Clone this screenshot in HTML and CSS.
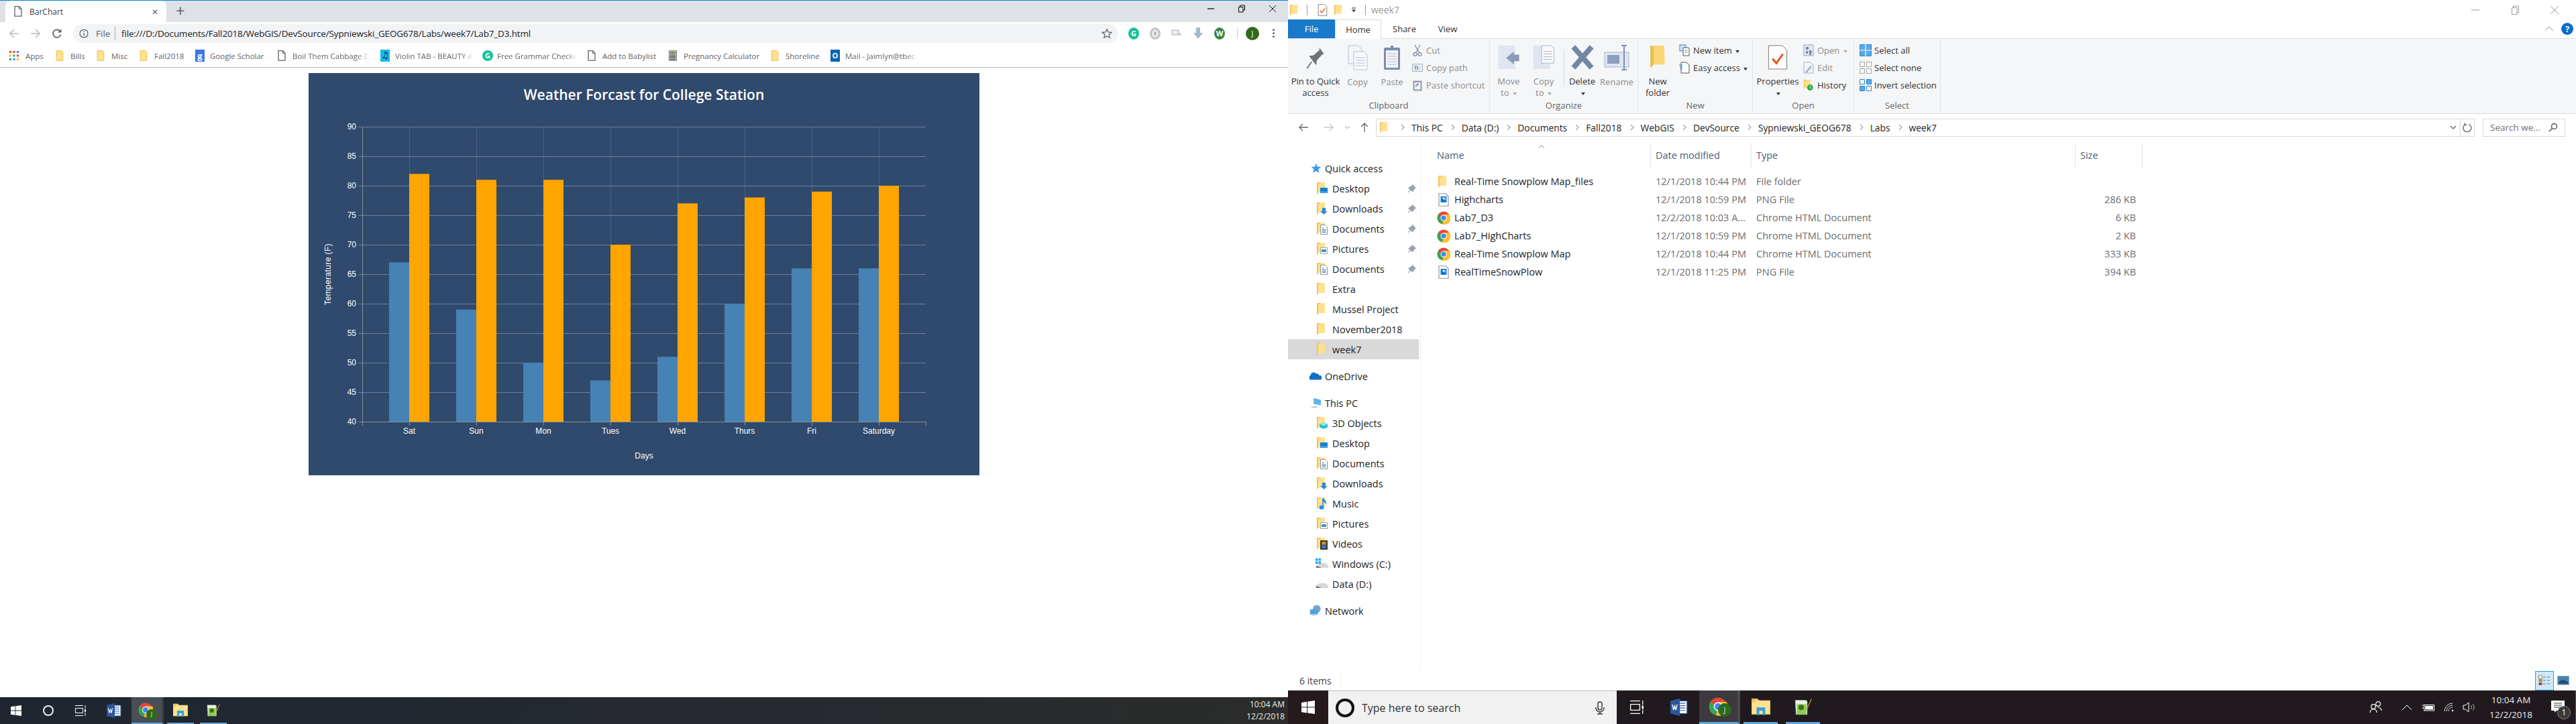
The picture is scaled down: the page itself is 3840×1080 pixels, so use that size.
FILE: index.html
```html
<!DOCTYPE html>
<html lang="en">
<head>
  <meta charset="UTF-8" />
  <title>BarChart</title>
  <link rel="stylesheet" href="styles.css">
</head>
<body>
  <svg class="defs" width="0" height="0">
    <symbol id="folder" viewBox="0 0 16 20">
      <path d="M0 1h5l2 1 5-1v15H3l-3 3z" fill="#f2c55c"/>
      <path d="M2 3l5-1 5-1v15H2z" fill="#ffe08f"/>
    </symbol>
    <symbol id="f-desktop" viewBox="0 0 16 20">
      <use href="#folder" width="16" height="20"/>
      <rect x="5" y="9" width="11" height="8" fill="#0f80d8"/>
      <path d="M6 15.500h9" stroke="#fff" stroke-dasharray="1 1"/>
    </symbol>
    <symbol id="f-downloads" viewBox="0 0 16 20">
      <use href="#folder" width="16" height="20"/>
      <path d="M8 9h5v5h3l-5.500 5L5 14h3z" fill="#2f87d8"/>
    </symbol>
    <symbol id="f-documents" viewBox="0 0 16 20">
      <use href="#folder" width="16" height="20"/>
      <path d="M5.500 4.500h7l3 3v11h-10z" fill="#fff" stroke="#8b8f95"/>
      <path d="M7.500 9h3M7.500 11.500h6M7.500 13.500h6M7.500 15.500h6" stroke="#3e7cb8"/>
    </symbol>
    <symbol id="f-pictures" viewBox="0 0 16 20">
      <use href="#folder" width="16" height="20"/>
      <rect x="5.500" y="8.500" width="10" height="9" fill="#fff" stroke="#a0a4a8"/>
      <rect x="7" y="11" width="7" height="4" fill="#4d90c4"/>
    </symbol>
    <symbol id="f-3d" viewBox="0 0 16 20">
      <use href="#folder" width="16" height="20"/>
      <path d="M10 9l6 2.500v5L10 19l-6-2.500v-5z" fill="#2cc0d8"/>
      <path d="M4 11.500l6 2.500 6-2.500-6-2.500z" fill="#9be6f0"/>
    </symbol>
    <symbol id="f-music" viewBox="0 0 16 20">
      <use href="#folder" width="16" height="20"/>
      <path d="M9 2v13" stroke="#1e90ea" stroke-width="1.600"/>
      <ellipse cx="7" cy="16" rx="3.500" ry="3" fill="#1e90ea"/>
      <path d="M9 2c3 2 6 5 5 10-1-3-3-4-5-5z" fill="#1e90ea"/>
    </symbol>
    <symbol id="f-videos" viewBox="0 0 16 20">
      <use href="#folder" width="16" height="20"/>
      <rect x="5" y="5" width="11" height="14" fill="#3a3a3a"/>
      <rect x="7.500" y="7" width="6" height="4.500" fill="#d8922b"/>
      <rect x="7.500" y="12.500" width="6" height="4.500" fill="#3f78c4"/>
    </symbol>
    <symbol id="bmfolder" viewBox="0 0 12 18">
      <path d="M.5.5h8l3 2v15H.5z" fill="#ffe08c" stroke="#e6bd52"/>
    </symbol>
    <symbol id="doc" viewBox="0 0 12 16">
      <path d="M1 .7h6.500L11 4.200v11H1z" fill="#fff" stroke="#5f6368" stroke-width="1.300"/>
      <path d="M7.200 .7v3.800H11" fill="none" stroke="#5f6368"/>
    </symbol>
    <symbol id="chrome" viewBox="0 0 20 20">
      <circle cx="10" cy="10" r="9.500" fill="#e8453c"/>
      <path d="M10 10L1.800 5.200A9.500 9.500 0 0 0 8 19.300z" fill="#34a853"/>
      <path d="M10 5h9A9.500 9.500 0 0 1 8 19.300L10 10z" fill="#fbc02d"/>
      <circle cx="10" cy="10" r="4.600" fill="#fff"/>
      <circle cx="10" cy="10" r="3.600" fill="#4285f4"/>
    </symbol>
    <symbol id="png" viewBox="0 0 14 18">
      <path d="M.7.7h9l3.600 3.600v13H.7z" fill="#fff" stroke="#8a929c"/>
      <rect x="3" y="4.500" width="8" height="8" fill="#0a78d5"/>
      <path d="M4.500 6l2.500 3 1-1 1.500 2V6z" fill="#cfe6fa"/>
    </symbol>
    <symbol id="pin" viewBox="0 0 12 12">
      <path d="M7 .8l4.200 4.200-1.400.6-1.800 3-1 1L1.800 5.400l1-1 3-1.800zM4 7.800L.8 11.200" fill="#9aa3ad" stroke="#9aa3ad"/>
    </symbol>
    <symbol id="tile-word" viewBox="0 0 22 22">
      <rect x="9" y="3" width="12" height="16" fill="#fff" stroke="#2b579a"/>
      <path d="M12 6h7M12 9h7M12 12h7M12 15h7" stroke="#2b579a"/>
      <path d="M0 3l12-3v22L0 19z" fill="#2b579a"/>
      <path d="M2.500 7.500l1.500 7 1.500-5 1.500 5 1.500-7" fill="none" stroke="#fff" stroke-width="1.200"/>
    </symbol>
    <symbol id="tile-explorer" viewBox="0 0 22 20">
      <path d="M0 1h7l2 2h13v16H0z" fill="#ffe190" stroke="#e2c062" stroke-width=".6"/>
      <path d="M0 1h7l2 2H4v2H0z" fill="#f3c55c"/>
      <path d="M6 20V11h10v9h-3v-5H9v5z" fill="#2ea3e0"/>
    </symbol>
    <symbol id="tile-notepad" viewBox="0 0 22 22">
      <path d="M1 3h13l2 1v17H2z" fill="#e8f0e3" stroke="#a8b4a0" stroke-width=".5"/>
      <path d="M3 8h12v13H3z" fill="#8ecb4e"/>
      <circle cx="8.500" cy="12" r="3.400" fill="#3a6e1e"/>
      <path d="M15 14L21 1l1 .5L16 15z" fill="#b88a2c"/>
    </symbol>
    <symbol id="winlogo" viewBox="0 0 16 16">
      <path d="M0 2.300l6.600-1v6.300H0zM7.400 1.200L16 0v7.600H7.400zM0 8.400h6.600v6.300L0 13.700zM7.400 8.400H16V16l-8.600-1.200z" fill="#fff"/>
    </symbol>
    <symbol id="taskview" viewBox="0 0 16 16">
      <path d="M0 .5h12M0 15.500h12M.5 4.500h11v7H.5z" fill="none" stroke="#fff"/>
      <path d="M15 0v5M15 11v5" stroke="#fff"/>
      <rect x="14" y="6" width="2" height="4" fill="#fff"/>
    </symbol>
    <symbol id="chev" viewBox="0 0 6 10">
      <path d="M1 1l4 4-4 4" fill="none" stroke="#6d6d6d"/>
    </symbol>
  </svg>

  <main class="screen">
    <section class="monitor">
      <div class="browser">
        <div class="tabstrip">
          <div class="tab">
            <svg class="tab-icon"><use href="#doc"/></svg>
            <span class="tab-title">BarChart</span>
            <span class="tab-close">&#10005;</span>
          </div>
          <span class="tab-new">+</span>
          <div class="winctl winctl-chrome">
            <svg width="12" height="12" viewBox="0 0 12 12"><path d="M1 6h10" stroke="#000" stroke-width="1.200"/></svg>
            <svg width="12" height="12" viewBox="0 0 12 12"><path d="M3.500 3.500V1h7v7H8M1.500 3.500h6.500v7.500H1.500z" fill="none" stroke="#000"/></svg>
            <svg width="12" height="12" viewBox="0 0 12 12"><path d="M1 1l10 10M11 1L1 11" stroke="#000" stroke-width=".9"/></svg>
          </div>
        </div>

        <div class="toolbar">
          <svg class="tb-btn" viewBox="0 0 16 16"><path d="M15 8H2M8 2L2 8l6 6" fill="none" stroke="#b9bcc0" stroke-width="1.600"/></svg>
          <svg class="tb-btn" viewBox="0 0 16 16"><path d="M1 8h13M8 2l6 6-6 6" fill="none" stroke="#b9bcc0" stroke-width="1.600"/></svg>
          <svg class="tb-btn" viewBox="0 0 16 16"><path d="M13.500 9.500A5.800 5.800 0 1 1 12 4" fill="none" stroke="#5f6368" stroke-width="1.800"/><path d="M14.500 1v5.500H9z" fill="#5f6368"/></svg>
          <div class="omnibox">
            <svg class="omni-info" viewBox="0 0 16 16"><circle cx="8" cy="8" r="6.800" fill="none" stroke="#5f6368" stroke-width="1.400"/><path d="M8 7v5M8 4v1.600" stroke="#5f6368" stroke-width="1.600"/></svg>
            <span class="omni-file">File</span>
            <span class="omni-url">file:///D:/Documents/Fall2018/WebGIS/DevSource/Sypniewski_GEOG678/Labs/week7/Lab7_D3.html</span>
            <svg class="omni-star" viewBox="0 0 16 16"><path d="M8 1.500l2 4.400 4.800.5-3.600 3.200 1 4.700L8 11.900l-4.200 2.400 1-4.700L1.200 6.400 6 5.900z" fill="none" stroke="#5f6368" stroke-width="1.300"/></svg>
          </div>
          <div class="exts">
            <span class="ext ext-g">G</span>
            <span class="ext ext-o"></span>
            <svg class="ext-svg" viewBox="0 0 16 16"><path d="M1 3h10v7H1z" fill="#eee" stroke="#aaa"/><path d="M9 9h6M12 7l3 2-3 2" fill="none" stroke="#bbb"/></svg>
            <svg class="ext-svg" viewBox="0 0 16 18"><path d="M5 0h6v8h4l-7 9-7-9h4z" fill="#a7b9c4"/></svg>
            <span class="ext ext-w">W</span>
            <span class="ext-sep"></span>
            <span class="avatar">J</span>
            <span class="kebab"></span>
          </div>
        </div>

        <div class="bookmarks">
          <div class="bm bm-apps">
            <svg class="bm-apps-icon" viewBox="0 0 14 14">
              <g fill="#ea4335"><rect width="3" height="3"/><rect x="5.500" width="3" height="3"/></g>
              <rect x="11" width="3" height="3" fill="#4285f4"/>
              <rect y="5.500" width="3" height="3" fill="#fbbc05"/>
              <rect x="5.500" y="5.500" width="3" height="3" fill="#34a853"/>
              <rect x="11" y="5.500" width="3" height="3" fill="#ea4335"/>
              <rect y="11" width="3" height="3" fill="#34a853"/>
              <rect x="5.500" y="11" width="3" height="3" fill="#4285f4"/>
              <rect x="11" y="11" width="3" height="3" fill="#fbbc05"/>
            </svg>
            <span>Apps</span>
          </div>
          <div class="bm bm-bills"><svg class="bm-icon"><use href="#bmfolder"/></svg><span>Bills</span></div>
          <div class="bm bm-misc"><svg class="bm-icon"><use href="#bmfolder"/></svg><span>Misc</span></div>
          <div class="bm bm-fall"><svg class="bm-icon"><use href="#bmfolder"/></svg><span>Fall2018</span></div>
          <div class="bm bm-scholar"><span class="fav fav-scholar">g</span><span>Google Scholar</span></div>
          <div class="bm bm-boil"><svg class="bm-icon"><use href="#doc"/></svg><span class="bm-fade">Boil Them Cabbage D</span></div>
          <div class="bm bm-violin"><span class="fav fav-violin">&#9835;</span><span class="bm-fade">Violin TAB - BEAUTY A</span></div>
          <div class="bm bm-grammar"><span class="fav fav-grammar">G</span><span class="bm-fade">Free Grammar Checke</span></div>
          <div class="bm bm-baby"><svg class="bm-icon"><use href="#doc"/></svg><span>Add to Babylist</span></div>
          <div class="bm bm-calc">
            <svg class="bm-icon" viewBox="0 0 14 18"><rect x=".5" y=".5" width="13" height="17" fill="#d9dbd6" stroke="#666"/><rect x="2" y="2" width="10" height="4" fill="#7c8a63"/><path d="M2 8h10M2 10.500h10M2 13h10M2 15.500h10" stroke="#222" stroke-width="1.400" stroke-dasharray="2 .6"/></svg>
            <span>Pregnancy Calculator</span>
          </div>
          <div class="bm bm-shore"><svg class="bm-icon"><use href="#bmfolder"/></svg><span>Shoreline</span></div>
          <div class="bm bm-mail"><span class="fav fav-mail">O</span><span class="bm-fade">Mail - Jaimlyn@tbec-</span></div>
        </div>

        <div class="page">
          <svg class="chart" width="1000" height="600" viewBox="0 0 1000 600">
            <rect class="chart-bg" width="1000" height="600"/>
            <text class="chart-title" x="500" y="40">Weather Forcast for College Station</text>

            <path class="grid-y" d="M74 80.500h846M74 124.500h846M74 168.500h846M74 212.500h846M74 256.500h846M74 300.500h846M74 344.500h846M74 388.500h846M74 432.500h846M74 476.500h846"/>
            <path class="grid-x" d="M150.500 80v440M250.500 80v440M350.500 80v440M450.500 80v440M550.500 80v440M650.500 80v440M750.500 80v440M850.500 80v440"/>

            <g class="bars-low">
              <rect x="120" y="282.400" width="30" height="237.600"/>
              <rect x="220" y="352.800" width="30" height="167.200"/>
              <rect x="320" y="432" width="30" height="88"/>
              <rect x="420" y="458.400" width="30" height="61.600"/>
              <rect x="520" y="423.200" width="30" height="96.800"/>
              <rect x="620" y="344" width="30" height="176"/>
              <rect x="720" y="291.200" width="30" height="228.800"/>
              <rect x="820" y="291.200" width="30" height="228.800"/>
            </g>
            <g class="bars-high">
              <rect x="150" y="150.400" width="30" height="369.600"/>
              <rect x="250" y="159.200" width="30" height="360.800"/>
              <rect x="350" y="159.200" width="30" height="360.800"/>
              <rect x="450" y="256" width="30" height="264"/>
              <rect x="550" y="194.400" width="30" height="325.600"/>
              <rect x="650" y="185.600" width="30" height="334.400"/>
              <rect x="750" y="176.800" width="30" height="343.200"/>
              <rect x="850" y="168" width="30" height="352"/>
            </g>

            <path class="axis" d="M74 520.500h846M80.500 80v446M920.500 520v6M150.500 520v6M250.500 520v6M350.500 520v6M450.500 520v6M550.500 520v6M650.500 520v6M750.500 520v6M850.500 520v6"/>

            <g class="tick-y">
              <text x="71" y="84">90</text>
              <text x="71" y="128">85</text>
              <text x="71" y="172">80</text>
              <text x="71" y="216">75</text>
              <text x="71" y="260">70</text>
              <text x="71" y="304">65</text>
              <text x="71" y="348">60</text>
              <text x="71" y="392">55</text>
              <text x="71" y="436">50</text>
              <text x="71" y="480">45</text>
              <text x="71" y="524">40</text>
            </g>
            <g class="tick-x">
              <text x="150" y="538">Sat</text>
              <text x="250" y="538">Sun</text>
              <text x="350" y="538">Mon</text>
              <text x="450" y="538">Tues</text>
              <text x="550" y="538">Wed</text>
              <text x="650" y="538">Thurs</text>
              <text x="750" y="538">Fri</text>
              <text x="850" y="538">Saturday</text>
            </g>
            <text class="axis-label" x="500" y="575">Days</text>
            <text class="axis-label axis-label-y" transform="translate(33 300) rotate(-90)">Temperature (F)</text>
          </svg>
        </div>
      </div>

      <footer class="taskbar taskbar-left">
        <svg class="tk-start"><use href="#winlogo"/></svg>
        <span class="tk-ring"></span>
        <svg class="tk-view"><use href="#taskview"/></svg>
        <svg class="tk-word"><use href="#tile-word"/></svg>
        <div class="tk-tile tk-chrome"><svg class="tk-chrome-icon"><use href="#chrome"/></svg><span class="tk-badge">J</span></div>
        <div class="tk-tile tk-explorer"><svg class="tk-icon"><use href="#tile-explorer"/></svg></div>
        <div class="tk-tile tk-notepad"><svg class="tk-icon"><use href="#tile-notepad"/></svg></div>
        <div class="tk-clock"><span>10:04 AM</span><span>12/2/2018</span></div>
      </footer>
    </section>

    <section class="monitor">
      <div class="explorer">
        <div class="titlebar">
          <svg class="qa-folder"><use href="#folder"/></svg>
          <span class="qa-sep"></span>
          <svg class="qa-check" viewBox="0 0 16 20"><path d="M1 .5h10l4 4v15H1z" fill="#fff" stroke="#777"/><path d="M4 11l3 3 5-7" fill="none" stroke="#e8531f" stroke-width="1.500"/></svg>
          <svg class="qa-folder qa-folder2"><use href="#folder"/></svg>
          <svg class="qa-drop" viewBox="0 0 8 8"><path d="M1 1h6" stroke="#222"/><path d="M1 3.500h6L4 7z" fill="#222"/></svg>
          <span class="qa-sep qa-sep2"></span>
          <span class="title-text">week7</span>
          <div class="winctl winctl-ex">
            <svg width="14" height="14" viewBox="0 0 14 14"><path d="M1 7h12" stroke="#999"/></svg>
            <svg width="14" height="14" viewBox="0 0 14 14"><path d="M4.500 3.500V1h8v10H10M2.500 3.500H10v10H2.500z" fill="none" stroke="#999"/></svg>
            <svg width="14" height="14" viewBox="0 0 14 14"><path d="M1 1l12 12M13 1L1 13" stroke="#999"/></svg>
          </div>
        </div>

        <div class="ribbon-tabs">
          <span class="rt rt-file">File</span>
          <span class="rt rt-home">Home</span>
          <span class="rt rt-share">Share</span>
          <span class="rt rt-view">View</span>
          <svg class="rt-caret" viewBox="0 0 14 8"><path d="M1 7l6-6 6 6" fill="none" stroke="#999"/></svg>
          <span class="rt-help">?</span>
        </div>

        <div class="ribbon">
          <div class="rgroup rg-clipboard">
            <div class="rg-body">
              <div class="rbig rbig-pin">
                <svg class="rbig-icon" viewBox="0 0 30 38"><path d="M21 4l7 10-3 1-8 9-1 7-11-14 7-1 9-8z" fill="#6f747a"/><path d="M9 26L2 36" stroke="#6f747a" stroke-width="2"/></svg>
                <span>Pin to Quick<br>access</span>
              </div>
              <div class="rbig rbig-copy dim">
                <svg class="rbig-icon" viewBox="0 0 30 38"><path d="M1 1h15l5 5v22H1z" fill="#f3f5f8" stroke="#b6c1d2"/><path d="M9 10h15l5 5v22H9z" fill="#f8f9fb" stroke="#b6c1d2"/><path d="M12 19h14M12 23h14M12 27h14M12 31h14" stroke="#b6c1d2"/></svg>
                <span>Copy</span>
              </div>
              <div class="rbig rbig-paste dim">
                <svg class="rbig-icon" viewBox="0 0 30 38"><rect x="3" y="4" width="24" height="33" rx="2" fill="#7d8eab"/><rect x="6" y="8" width="18" height="26" fill="#f2f4f7"/><path d="M8 13h14M8 17h14M8 21h14M8 25h14M8 29h14" stroke="#b6c1d2"/><path d="M10 7l3-2V1h4v4l3 2z" fill="#7d8eab"/></svg>
                <span>Paste</span>
              </div>
              <div class="rsmall-list rl-clip dim">
                <div class="rsmall"><svg class="rsmall-icon" viewBox="0 0 16 18"><path d="M4 1l6 11M12 1L6 12" stroke="#8593ab" stroke-width="1.400"/><circle cx="4.500" cy="15" r="2.500" fill="none" stroke="#8593ab" stroke-width="1.400"/><circle cx="11.500" cy="15" r="2.500" fill="none" stroke="#8593ab" stroke-width="1.400"/></svg><span>Cut</span></div>
                <div class="rsmall"><svg class="rsmall-icon" viewBox="0 0 16 18"><rect x=".5" y="3.500" width="15" height="11" fill="#e7ebf1" stroke="#a9b4c6"/><path d="M4 6l2 6M7 6l2 6" stroke="#556"/></svg><span>Copy path</span></div>
                <div class="rsmall"><svg class="rsmall-icon" viewBox="0 0 16 18"><rect x="1.500" y="2.500" width="13" height="15" fill="#8b9ab3"/><rect x="3.500" y="5" width="9" height="10.500" fill="#f2f4f7"/><path d="M6 12V8h4M8 7l2 1-2 2" fill="none" stroke="#667"/></svg><span>Paste shortcut</span></div>
              </div>
            </div>
            <span class="rg-label">Clipboard</span>
          </div>

          <div class="rgroup rg-organize">
            <div class="rg-body">
              <div class="rbig rbig-move dim">
                <svg class="rbig-icon" viewBox="0 0 34 38"><rect x="1" y="1" width="26" height="36" fill="#dfe6f2"/><path d="M13 20l12-10v5h8v10h-8v5z" fill="#8c9bb5"/></svg>
                <span>Move<br>to <i class="drop"></i></span>
              </div>
              <div class="rbig rbig-copyto dim">
                <svg class="rbig-icon" viewBox="0 0 34 38"><rect x="1" y="1" width="26" height="36" fill="#dfe6f2"/><path d="M14 1h14l5 5v22H14z" fill="#f7f8fa" stroke="#aab6c9"/><path d="M17 10h13M17 14h13M17 18h13M17 22h13" stroke="#aab6c9"/></svg>
                <span>Copy<br>to <i class="drop"></i></span>
              </div>
              <span class="rg-innersep"></span>
              <div class="rbig rbig-delete">
                <svg class="rbig-icon" viewBox="0 0 34 38"><path d="M3 3l28 32M31 3L3 35" stroke="#7486a6" stroke-width="8"/></svg>
                <span>Delete<br><i class="drop drop-dark"></i></span>
              </div>
              <div class="rbig rbig-rename dim">
                <svg class="rbig-icon" viewBox="0 0 38 38"><rect x="1" y="11" width="36" height="22" fill="#dfe6f2" stroke="#aab6c9"/><rect x="5" y="15" width="18" height="13" fill="#8c9fbd"/><path d="M26 1h8M26 37h8M30 1v36" stroke="#7f90ab" stroke-width="2"/></svg>
                <span>Rename</span>
              </div>
            </div>
            <span class="rg-label">Organize</span>
          </div>

          <div class="rgroup rg-new">
            <div class="rg-body">
              <div class="rbig rbig-folder">
                <svg class="rbig-icon" viewBox="0 0 24 38"><path d="M1 1h21l1 29H6l-5 5z" fill="#fbd675"/><path d="M1 1v34l5-5V3z" fill="#e9bd53"/></svg>
                <span>New<br>folder</span>
              </div>
              <div class="rsmall-list rl-new">
                <div class="rsmall"><svg class="rsmall-icon" viewBox="0 0 16 18"><rect x="1" y="1" width="9" height="9" fill="#d8e8f5" stroke="#4f7ea8"/><path d="M6 5h8l1 1v11H6z" fill="#fff" stroke="#555"/><path d="M8 9h5M8 12h5" stroke="#888"/></svg><span>New item <i class="drop drop-dark"></i></span></div>
                <div class="rsmall"><svg class="rsmall-icon" viewBox="0 0 16 18"><path d="M3 1h8l4 4v12H3z" fill="#fff" stroke="#555"/><path d="M0 5h5M1 8h4M2 11h3" stroke="#2472c8"/></svg><span>Easy access <i class="drop drop-dark"></i></span></div>
              </div>
            </div>
            <span class="rg-label">New</span>
          </div>

          <div class="rgroup rg-open">
            <div class="rg-body">
              <div class="rbig rbig-props">
                <svg class="rbig-icon" viewBox="0 0 30 38"><path d="M1 1h21l7 7v29H1z" fill="#fff" stroke="#777"/><path d="M7 21l6 7 10-14" fill="none" stroke="#e8531f" stroke-width="3"/></svg>
                <span>Properties<br><i class="drop drop-dark"></i></span>
              </div>
              <div class="rsmall-list rl-open">
                <div class="rsmall dim"><svg class="rsmall-icon" viewBox="0 0 16 18"><rect x="1" y="1" width="14" height="16" fill="#e5e9f0" stroke="#9aa6ba"/><path d="M4 4h4v4H4zM4 10h3v4H4z" fill="#7a8aa5"/><path d="M10 8l4 4h-2v4h-3v-4H8z" fill="#7a8aa5"/></svg><span>Open <i class="drop"></i></span></div>
                <div class="rsmall dim"><svg class="rsmall-icon" viewBox="0 0 16 18"><path d="M1 1h10l4 4v12H1z" fill="#f4f6f9" stroke="#a3b0c4"/><path d="M3 15L11 6l2 2-8 9z" fill="#9fb5d6"/></svg><span>Edit</span></div>
                <div class="rsmall"><svg class="rsmall-icon" viewBox="0 0 16 20"><use href="#folder" width="14" height="18"/><circle cx="10.500" cy="14" r="5" fill="#2fae4a"/><path d="M10.500 11v3l2 1.500" fill="none" stroke="#fff"/></svg><span>History</span></div>
              </div>
            </div>
            <span class="rg-label">Open</span>
          </div>

          <div class="rgroup rg-select">
            <div class="rg-body">
              <div class="rsmall-list rl-select">
                <div class="rsmall"><svg class="rsmall-icon" viewBox="0 0 18 18"><path d="M.5.5h17v17H.5z" fill="#59a9e8" stroke="#2e86cf"/><path d="M9 0v18M0 9h18" stroke="#fff" stroke-width="1.200"/></svg><span>Select all</span></div>
                <div class="rsmall"><svg class="rsmall-icon" viewBox="0 0 18 18"><path d="M.5.500h7v7h-7zM10.500.500h7v7h-7zM.5 10.500h7v7h-7zM10.500 10.500h7v7h-7z" fill="none" stroke="#a9a9a9"/></svg><span>Select none</span></div>
                <div class="rsmall"><svg class="rsmall-icon" viewBox="0 0 18 18"><path d="M.5 10.500h7v7h-7zM10.500.500h7v7h-7z" fill="#59a9e8" stroke="#2e86cf"/><path d="M.5.500h7v7h-7zM10.500 10.500h7v7h-7z" fill="none" stroke="#2e86cf"/></svg><span>Invert selection</span></div>
              </div>
            </div>
            <span class="rg-label">Select</span>
          </div>
        </div>

        <div class="navrow">
          <svg class="nav-btn nav-back" viewBox="0 0 16 14"><path d="M15 7H2M7 2L2 7l5 5" fill="none" stroke="#666" stroke-width="1.300"/></svg>
          <svg class="nav-btn nav-fwd" viewBox="0 0 16 14"><path d="M1 7h13M9 2l5 5-5 5" fill="none" stroke="#c5c5c5" stroke-width="1.300"/></svg>
          <svg class="nav-btn nav-drop" viewBox="0 0 10 6"><path d="M1 1l4 4 4-4" fill="none" stroke="#777"/></svg>
          <svg class="nav-btn nav-up" viewBox="0 0 14 16"><path d="M7 15V2M2 7l5-5 5 5" fill="none" stroke="#666" stroke-width="1.300"/></svg>
          <div class="address">
            <svg class="addr-folder"><use href="#folder"/></svg>
            <svg class="crumb-sep"><use href="#chev"/></svg><span>This PC</span>
            <svg class="crumb-sep"><use href="#chev"/></svg><span>Data (D:)</span>
            <svg class="crumb-sep"><use href="#chev"/></svg><span>Documents</span>
            <svg class="crumb-sep"><use href="#chev"/></svg><span>Fall2018</span>
            <svg class="crumb-sep"><use href="#chev"/></svg><span>WebGIS</span>
            <svg class="crumb-sep"><use href="#chev"/></svg><span>DevSource</span>
            <svg class="crumb-sep"><use href="#chev"/></svg><span>Sypniewski_GEOG678</span>
            <svg class="crumb-sep"><use href="#chev"/></svg><span>Labs</span>
            <svg class="crumb-sep"><use href="#chev"/></svg><span>week7</span>
            <div class="addr-end">
              <svg class="addr-drop" viewBox="0 0 10 6"><path d="M1 1l4 4 4-4" fill="none" stroke="#555" stroke-width="1.200"/></svg>
              <span class="addr-refresh"><svg viewBox="0 0 14 16" width="14" height="16"><path d="M9 3.200A6 6 0 1 1 4.500 3.200" fill="none" stroke="#555" stroke-width="1.200"/><path d="M3 1v3.500h3.500" fill="none" stroke="#555"/></svg></span>
            </div>
          </div>
          <div class="searchbox">
            <span>Search we...</span>
            <svg viewBox="0 0 14 14" width="14" height="14"><circle cx="8.500" cy="5.500" r="4" fill="none" stroke="#555" stroke-width="1.500"/><path d="M5.500 8.500L1 13" stroke="#555" stroke-width="1.600"/></svg>
          </div>
        </div>

        <div class="ex-body">
          <nav class="sidebar">
            <div class="side side-top"><svg class="side-top-icon" viewBox="0 0 20 18"><path d="M11 1l2.300 5.500 6 .4-4.600 3.800 1.500 5.800-5.200-3.100-5 3.100 1.400-5.800L3 6.900l6-.4z" fill="#3a9be8"/></svg><span>Quick access</span></div>
            <div class="side"><svg class="side-icon"><use href="#f-desktop"/></svg><span>Desktop</span><svg class="side-pin"><use href="#pin"/></svg></div>
            <div class="side"><svg class="side-icon"><use href="#f-downloads"/></svg><span>Downloads</span><svg class="side-pin"><use href="#pin"/></svg></div>
            <div class="side"><svg class="side-icon"><use href="#f-documents"/></svg><span>Documents</span><svg class="side-pin"><use href="#pin"/></svg></div>
            <div class="side"><svg class="side-icon"><use href="#f-pictures"/></svg><span>Pictures</span><svg class="side-pin"><use href="#pin"/></svg></div>
            <div class="side"><svg class="side-icon"><use href="#f-documents"/></svg><span>Documents</span><svg class="side-pin"><use href="#pin"/></svg></div>
            <div class="side"><svg class="side-icon"><use href="#folder"/></svg><span>Extra</span></div>
            <div class="side"><svg class="side-icon"><use href="#folder"/></svg><span>Mussel Project</span></div>
            <div class="side"><svg class="side-icon"><use href="#folder"/></svg><span>November2018</span></div>
            <div class="side side-on"><svg class="side-icon"><use href="#folder"/></svg><span>week7</span></div>

            <div class="side side-top side-gap"><svg class="side-top-icon" viewBox="0 0 20 14"><path d="M2 13a3.500 3.500 0 0 1 0-7 5 5 0 0 1 9-3 4 4 0 0 1 5 3 3.500 3.500 0 0 1 2 7z" fill="#0f6fc6"/></svg><span>OneDrive</span></div>
            <div class="side side-top side-gap"><svg class="side-top-icon" viewBox="0 0 20 18"><path d="M7 1l12 3v9L7 11z" fill="#5cb8ea"/><path d="M1 16l9-2 5 2-7 2z" fill="#c9ced4"/></svg><span>This PC</span></div>
            <div class="side"><svg class="side-icon"><use href="#f-3d"/></svg><span>3D Objects</span></div>
            <div class="side"><svg class="side-icon"><use href="#f-desktop"/></svg><span>Desktop</span></div>
            <div class="side"><svg class="side-icon"><use href="#f-documents"/></svg><span>Documents</span></div>
            <div class="side"><svg class="side-icon"><use href="#f-downloads"/></svg><span>Downloads</span></div>
            <div class="side"><svg class="side-icon"><use href="#f-music"/></svg><span>Music</span></div>
            <div class="side"><svg class="side-icon"><use href="#f-pictures"/></svg><span>Pictures</span></div>
            <div class="side"><svg class="side-icon"><use href="#f-videos"/></svg><span>Videos</span></div>
            <div class="side"><svg class="side-drive" viewBox="0 0 20 16"><path d="M1 11l5-4h9l4 4v3H1z" fill="#d4d6d8"/><path d="M1 11v3h8z" fill="#666"/><g fill="#18a8ee"><rect width="3.500" height="3.500"/><rect x="4.500" width="3.500" height="3.500"/><rect y="4.500" width="3.500" height="3.500"/><rect x="4.500" y="4.500" width="3.500" height="3.500"/></g></svg><span>Windows (C:)</span></div>
            <div class="side"><svg class="side-drive" viewBox="0 0 20 16"><path d="M1 11l5-4h9l4 4v3H1z" fill="#d4d6d8"/><path d="M1 11v3h8z" fill="#666"/></svg><span>Data (D:)</span></div>
            <div class="side side-top side-gap"><svg class="side-top-icon" viewBox="0 0 20 20"><circle cx="12" cy="7" r="6.500" fill="#6fa6cf"/><path d="M1 8h13v8H1z" fill="#4aa3e3"/><path d="M5 16h5v2H4z" fill="#b8c3cc"/></svg><span>Network</span></div>
          </nav>

          <div class="files">
            <div class="file-head">
              <span class="col col-name">Name<svg class="sort" viewBox="0 0 10 6"><path d="M1 5l4-4 4 4" fill="none" stroke="#888"/></svg></span>
              <span class="col col-date">Date modified</span>
              <span class="col col-type">Type</span>
              <span class="col col-size">Size</span>
            </div>
            <div class="file-row"><span class="col col-name"><svg class="file-icon"><use href="#folder"/></svg>Real-Time Snowplow Map_files</span><span class="col col-date">12/1/2018 10:44 PM</span><span class="col col-type">File folder</span><span class="col col-size"></span></div>
            <div class="file-row"><span class="col col-name"><svg class="file-icon"><use href="#png"/></svg>Highcharts</span><span class="col col-date">12/1/2018 10:59 PM</span><span class="col col-type">PNG File</span><span class="col col-size">286 KB</span></div>
            <div class="file-row"><span class="col col-name"><svg class="file-icon"><use href="#chrome"/></svg>Lab7_D3</span><span class="col col-date">12/2/2018 10:03 A...</span><span class="col col-type">Chrome HTML Document</span><span class="col col-size">6 KB</span></div>
            <div class="file-row"><span class="col col-name"><svg class="file-icon"><use href="#chrome"/></svg>Lab7_HighCharts</span><span class="col col-date">12/1/2018 10:59 PM</span><span class="col col-type">Chrome HTML Document</span><span class="col col-size">2 KB</span></div>
            <div class="file-row"><span class="col col-name"><svg class="file-icon"><use href="#chrome"/></svg>Real-Time Snowplow Map</span><span class="col col-date">12/1/2018 10:44 PM</span><span class="col col-type">Chrome HTML Document</span><span class="col col-size">333 KB</span></div>
            <div class="file-row"><span class="col col-name"><svg class="file-icon"><use href="#png"/></svg>RealTimeSnowPlow</span><span class="col col-date">12/1/2018 11:25 PM</span><span class="col col-type">PNG File</span><span class="col col-size">394 KB</span></div>
          </div>
        </div>

        <div class="statusbar">
          <span class="status-count">6 items</span>
          <div class="viewbtns">
            <span class="viewbtn-on"><svg width="18" height="16" viewBox="0 0 18 16"><rect x=".5" y="1" width="5" height="4" fill="#fff" stroke="#888"/><rect x=".5" y="6" width="5" height="4" fill="#a8943a"/><rect x=".5" y="11" width="5" height="4" fill="#a9442c"/><path d="M7 3h4M13 3h4M7 8h4M13 8h4M7 13h4M13 13h4" stroke="#777"/></svg></span>
            <svg width="18" height="14" viewBox="0 0 18 14"><rect x=".5" y=".5" width="17" height="13" fill="#3f86bd" stroke="#aaa"/><path d="M2 9l6-3 8 3v3H2z" fill="#264f6d"/></svg>
          </div>
        </div>
      </div>

      <footer class="taskbar taskbar-right">
        <div class="tr-start"><svg class="tr-logo"><use href="#winlogo"/></svg></div>
        <div class="tr-search">
          <span class="tr-ring"></span>
          <span class="tr-search-text">Type here to search</span>
          <svg class="tr-mic" viewBox="0 0 14 20"><rect x="4" y="1" width="6" height="12" rx="3" fill="none" stroke="#333" stroke-width="1.400"/><path d="M1 9v1a6 6 0 0 0 12 0V9M7 16v3M3 19h8" fill="none" stroke="#333" stroke-width="1.400"/></svg>
        </div>
        <svg class="tr-view"><use href="#taskview"/></svg>
        <svg class="tr-word"><use href="#tile-word"/></svg>
        <div class="tr-tile tr-chrome"><svg class="tr-chrome-icon"><use href="#chrome"/></svg><span class="tr-badge">J</span></div>
        <div class="tr-tile tr-explorer"><svg class="tr-icon"><use href="#tile-explorer"/></svg></div>
        <div class="tr-tile tr-notepad"><svg class="tr-icon"><use href="#tile-notepad"/></svg></div>

        <div class="tray">
          <svg class="tray-people" viewBox="0 0 20 20"><circle cx="13" cy="5" r="3.300" fill="none" stroke="#fff" stroke-width="1.200"/><circle cx="6" cy="9" r="3.300" fill="none" stroke="#fff" stroke-width="1.200"/><path d="M1 18c0-3 2-5 5-5s5 2 5 5M12 10c3 0 6 2 6 5" fill="none" stroke="#fff" stroke-width="1.200"/></svg>
          <svg class="tray-caret" viewBox="0 0 16 9"><path d="M1 8l7-7 7 7" fill="none" stroke="#fff"/></svg>
          <svg class="tray-batt" viewBox="0 0 20 12"><path d="M0 3h4M0 7h4" stroke="#fff" stroke-width=".8"/><rect x="3.500" y="2.500" width="15" height="8.500" fill="none" stroke="#fff"/><rect x="5" y="4" width="12" height="5.500" fill="#fff"/></svg>
          <svg class="tray-wifi" viewBox="0 0 16 14"><path d="M1 13a12 12 0 0 1 12-12M4 13a9 9 0 0 1 9-9M7 13a6 6 0 0 1 6-6" fill="none" stroke="#ddd"/><circle cx="13" cy="12" r="1.300" fill="#fff"/></svg>
          <svg class="tray-vol" viewBox="0 0 20 16"><path d="M1 5h3l5-4v14l-5-4H1z" fill="none" stroke="#fff"/><path d="M12 5a4 4 0 0 1 0 6M15 3a7 7 0 0 1 0 10" fill="none" stroke="#bbb"/></svg>
          <div class="tray-clock"><span>10:04 AM</span><span>12/2/2018</span></div>
          <div class="tray-note">
            <svg width="20" height="19" viewBox="0 0 20 19"><path d="M0 0h20v15H8l-3 3v-3H0z" fill="#fff"/><path d="M4 4h12M4 7h12M4 10h12" stroke="#333"/></svg>
            <span class="note-count">1</span>
          </div>
        </div>
      </footer>
    </section>
  </main>
</body>
</html>
```

FILE: styles.css
```css
* {
  box-sizing: border-box;
}
html, body {
  margin: 0;
  padding: 0;
  width: 3840px;
  height: 1080px;
  overflow: hidden;
  background: #fff;
  font-family: 'Open Sans', 'Noto Sans', sans-serif;
}
.defs {
  position: absolute;
}
.screen {
  display: grid;
  grid-template-columns: 1920px 1920px;
  height: 1080px;
}
.monitor {
  display: flex;
  flex-direction: column;
  height: 1080px;
  min-width: 0;
}

/* chrome window */
.browser {
  flex: 1;
  display: flex;
  flex-direction: column;
  min-height: 0;
}
.tabstrip {
  height: 33px;
  display: flex;
  align-items: flex-end;
  background: #dee1e6;
  border-top: 1px solid #0a84d8;
}
.tab {
  width: 240px;
  height: 32px;
  margin-left: 8px;
  padding: 0 12px 0 13px;
  display: flex;
  align-items: center;
  background: #fff;
  border-radius: 8px 8px 0 0;
  font-size: 12px;
  color: #3c4043;
}
.tab-icon {
  width: 12px;
  height: 16px;
  margin-right: 11px;
}
.tab-title {
  flex: 1;
}
.tab-close {
  font-size: 12px;
  color: #5f6368;
}
.tab-new {
  margin: 0 0 5px 14px;
  font-size: 24px;
  line-height: 24px;
  color: #5f6368;
}
.winctl {
  margin-left: auto;
  display: flex;
  gap: 34px;
}
.winctl-chrome {
  align-self: flex-start;
  margin-top: 6px;
  padding-right: 17px;
}
.toolbar {
  height: 33px;
  display: flex;
  align-items: center;
  padding-left: 13px;
  background: #fff;
}
.tb-btn {
  width: 16px;
  height: 16px;
  margin-right: 16px;
}
.omnibox {
  width: 1558px;
  height: 28px;
  padding: 0 9px;
  display: flex;
  align-items: center;
  background: #f1f3f4;
  border-radius: 14px;
  font-size: 13.5px;
  color: #202124;
}
.omni-info {
  width: 14px;
  height: 14px;
  margin-right: 11px;
}
.omni-file {
  width: 29px;
  margin-right: 9px;
  border-right: 1px solid #a8abad;
  line-height: 20px;
  color: #5f6368;
}
.omni-url {
  flex: 1;
  letter-spacing: -.15px;
}
.omni-star {
  width: 16px;
  height: 16px;
}
.exts {
  flex: 1;
  display: flex;
  align-items: center;
  padding-left: 15px;
}
.ext {
  width: 16px;
  height: 18px;
  margin-right: 16px;
  border-radius: 50%;
  font-size: 11px;
  font-weight: 700;
  line-height: 18px;
  text-align: center;
  color: #fff;
}
.ext-g {
  background: #15c39a;
}
.ext-o {
  background: #b8b8b8;
  border: 3px solid #c4c4c4;
  box-shadow: inset 0 0 0 3px #eee;
}
.ext-w {
  background: #3b8540;
  margin-right: 18px;
}
.ext-svg {
  width: 16px;
  height: 18px;
  margin-right: 16px;
}
.ext-sep {
  width: 1px;
  height: 16px;
  margin-right: 12px;
  background: #ccc;
}
.avatar {
  width: 20px;
  height: 20px;
  margin-right: 20px;
  border-radius: 50%;
  background: #2e6a1b;
  font-size: 11px;
  line-height: 20px;
  text-align: center;
  color: #fff;
}
.kebab {
  width: 3px;
  height: 3px;
  border-radius: 50%;
  background: #5f6368;
  box-shadow: 0 -5px 0 #5f6368, 0 5px 0 #5f6368;
}
.bookmarks {
  height: 35px;
  display: flex;
  align-items: center;
  padding-left: 14px;
  background: #fff;
  border-bottom: 1px solid #bbb;
  font-size: 11.5px;
  color: #5f6368;
  white-space: nowrap;
}
.bm {
  display: flex;
  align-items: center;
  gap: 10px;
  flex: none;
}
.bm-icon {
  width: 12px;
  height: 16px;
  flex: none;
}
.bm-apps-icon {
  width: 14px;
  height: 14px;
  flex: none;
}
.bm-fade {
  -webkit-mask-image: linear-gradient(to right, #000 85%, transparent);
  mask-image: linear-gradient(to right, #000 85%, transparent);
}
.bm-apps { width: 69px; }
.bm-bills { width: 61px; }
.bm-misc { width: 64px; }
.bm-fall { width: 83px; }
.bm-scholar { width: 123px; }
.bm-boil { width: 153px; }
.bm-violin { width: 152px; }
.bm-grammar { width: 157px; }
.bm-baby { width: 121px; }
.bm-calc { width: 152px; }
.bm-shore { width: 89px; }
.bm-mail { width: 135px; }
.fav {
  width: 14px;
  height: 18px;
  margin-right: -2px;
  flex: none;
  font-size: 13px;
  font-weight: 700;
  line-height: 18px;
  text-align: center;
  color: #fff;
}
.fav-scholar {
  background: #3b78e7;
}
.fav-violin {
  background: #14b9f0;
  color: #111;
  font-family: 'DejaVu Sans', sans-serif;
}
.fav-grammar {
  background: #15c39a;
  border-radius: 50%;
  width: 16px;
  height: 16px;
  margin-right: -4px;
  line-height: 16px;
  font-size: 11px;
}
.fav-mail {
  background: #0a64b4;
  font-size: 11px;
}
.page {
  flex: 1;
  padding: 8px 0 0 460px;
  background: #fff;
}
.chart {
  display: block;
}
.chart-bg {
  fill: #2f4a6d;
}
.chart-title {
  font-size: 21px;
  font-weight: 600;
  fill: #fff;
  text-anchor: middle;
}
.grid-y {
  stroke: rgba(255, 255, 255, .3);
  fill: none;
}
.grid-x {
  stroke: rgba(255, 255, 255, .13);
  fill: none;
}
.bars-low rect {
  fill: #4682b4;
}
.bars-high rect {
  fill: #ffa500;
}
.axis {
  stroke: #8a8f96;
  fill: none;
}
.tick-y text,
.tick-x text,
.axis-label {
  font-family: 'Liberation Sans', Arial, sans-serif;
  font-size: 12px;
  fill: #fff;
}
.tick-y text {
  text-anchor: end;
}
.tick-x text,
.axis-label {
  text-anchor: middle;
}
.axis-label-y {
  letter-spacing: .4px;
}

/* left taskbar */
.taskbar-left {
  height: 40px;
  display: flex;
  align-items: center;
  background: linear-gradient(to right, #1f2630, #262a2f 60%, #2b2c2b);
  color: #fff;
}
.tk-start {
  width: 16px;
  height: 16px;
  margin-left: 16px;
}
.tk-ring {
  width: 16px;
  height: 16px;
  margin-left: 32px;
  border: 2px solid #eee;
  border-radius: 50%;
}
.tk-view {
  width: 16px;
  height: 16px;
  margin-left: 32px;
}
.tk-word {
  width: 22px;
  height: 22px;
  margin-left: 31px;
}
.tk-tile {
  position: relative;
  height: 40px;
  display: flex;
  align-items: center;
  justify-content: center;
  border-bottom: 2px solid #63a8e0;
}
.tk-chrome {
  width: 48px;
  margin-left: 15px;
  background: #4a4f57;
  border-right: 3px solid #3a3e45;
}
.tk-chrome-icon {
  width: 22px;
  height: 22px;
  margin-left: -3px;
}
.tk-badge {
  position: absolute;
  left: 22px;
  top: 18px;
  width: 16px;
  height: 16px;
  border-radius: 50%;
  background: #2e6a1b;
  font-size: 9px;
  line-height: 16px;
  text-align: center;
  color: #ddd;
}
.tk-icon {
  width: 22px;
  height: 20px;
}
.tk-explorer {
  width: 40px;
  margin-left: 5px;
}
.tk-notepad {
  width: 40px;
  margin-left: 9px;
}
.tk-clock {
  margin-left: auto;
  padding-right: 5px;
  display: flex;
  flex-direction: column;
  align-items: flex-end;
  gap: 2px;
  font-size: 12px;
  line-height: 16px;
  color: #eee;
}

/* file explorer */
.explorer {
  flex: 1;
  min-height: 0;
  display: flex;
  flex-direction: column;
}
.titlebar {
  height: 29px;
  display: flex;
  align-items: center;
  padding-left: 3px;
}
.qa-folder {
  width: 14px;
  height: 18px;
}
.qa-sep {
  width: 1px;
  height: 16px;
  margin-left: 11px;
  background: #999;
}
.qa-check {
  width: 15px;
  height: 18px;
  margin-left: 15px;
}
.qa-folder2 {
  margin-left: 10px;
}
.qa-drop {
  width: 8px;
  height: 8px;
  margin-left: 11px;
}
.qa-sep2 {
  margin-left: 13px;
}
.title-text {
  margin-left: 8px;
  font-size: 14px;
  color: #999;
}
.winctl-ex {
  gap: 45px;
  padding-right: 25px;
}
.ribbon-tabs {
  height: 28px;
  display: flex;
  align-items: stretch;
  font-size: 13px;
  color: #333;
}
.rt {
  display: flex;
  align-items: center;
  justify-content: center;
}
.rt-file {
  width: 70px;
  background: #1979ca;
  color: #fff;
}
.rt-home {
  width: 69px;
  border: 1px solid #dadbdc;
  border-bottom: 0;
  margin-bottom: -1px;
  background: #fff;
  position: relative;
}
.rt-share {
  width: 69px;
}
.rt-view {
  width: 60px;
}
.rt-caret {
  width: 14px;
  height: 8px;
  margin: 10px 0 0 auto;
}
.rt-help {
  width: 18px;
  height: 18px;
  margin: 5px 4px 0 11px;
  border-radius: 50%;
  background: #0a6ccb;
  font-size: 13px;
  font-weight: 700;
  line-height: 18px;
  text-align: center;
  color: #fff;
}
.ribbon {
  height: 113px;
  display: flex;
  background: #f5f6f7;
  border-top: 1px solid #dadbdc;
  border-bottom: 1px solid #dadbdc;
  font-size: 13px;
  color: #333;
}
.rgroup {
  height: 108px;
  margin-top: 2px;
  display: flex;
  flex-direction: column;
  border-right: 1px solid #e2e3e4;
}
.rg-clipboard { width: 301px; }
.rg-organize { width: 221px; }
.rg-new { width: 171px; }
.rg-open { width: 151px; }
.rg-select { width: 129px; }
.rg-body {
  flex: 1;
  display: flex;
  min-height: 0;
}
.rg-label {
  height: 21px;
  font-size: 13px;
  line-height: 20px;
  text-align: center;
  color: #666;
}
.rbig {
  display: flex;
  flex-direction: column;
  align-items: center;
  font-size: 13px;
  line-height: 17px;
  text-align: center;
  white-space: nowrap;
}
.rbig-icon {
  height: 38px;
  width: 38px;
  margin: 7px 0 9px;
}
.dim {
  color: #8d8d8d;
}
.rbig-pin { width: 82px; }
.rbig-copy { width: 43px; }
.rbig-paste { width: 56px; margin-left: 2px; }
.rl-clip { margin-left: 1px; }
.rbig-move { width: 52px; margin-left: 2px; }
.rbig-copyto { width: 52px; }
.rg-innersep {
  width: 1px;
  height: 55px;
  margin: 14px 0 0 4px;
  background: #dcdcdc;
}
.rbig-delete { width: 51px; margin-left: 1px; }
.rbig-rename { width: 52px; }
.rbig-folder { width: 52px; margin-left: 3px; }
.rl-new { margin-left: 5px; }
.rbig-props { width: 68px; margin-left: 3px; }
.rl-open { margin-left: 3px; }
.rl-select { margin-left: 8px; }
.rsmall-list {
  display: flex;
  flex-direction: column;
  padding-top: 6px;
  gap: 8px;
  white-space: nowrap;
}
.rsmall {
  height: 18px;
  display: flex;
  align-items: center;
  gap: 4px;
  line-height: 18px;
}
.rsmall-icon {
  width: 18px;
  height: 18px;
  flex: none;
}
.drop {
  display: inline-block;
  width: 0;
  height: 0;
  margin-left: 2px;
  vertical-align: middle;
  border: 3px solid transparent;
  border-top: 4px solid #aaa;
  border-bottom: 0;
}
.drop-dark {
  border-top-color: #333;
}
.navrow {
  height: 40px;
  display: flex;
  align-items: center;
  flex: none;
  padding-left: 15px;
}
.nav-btn {
  flex: none;
}
.nav-back, .nav-fwd {
  width: 16px;
  height: 14px;
}
.nav-fwd {
  margin-left: 22px;
}
.nav-drop {
  width: 9px;
  height: 6px;
  margin-left: 15px;
}
.nav-up {
  width: 14px;
  height: 16px;
  margin-left: 14px;
}
.address {
  width: 1638px;
  height: 27px;
  margin-left: 10px;
  padding-left: 5px;
  display: flex;
  align-items: center;
  border: 1px solid #d9d9d9;
  font-size: 13.8px;
  color: #1c1c1c;
  white-space: nowrap;
}
.addr-folder {
  width: 14px;
  height: 18px;
  margin-right: 5px;
}
.crumb-sep {
  width: 6px;
  height: 10px;
  margin: 0 10px 0 12px;
  flex: none;
}
.addr-end {
  margin-left: auto;
  display: flex;
  align-items: center;
  height: 100%;
}
.addr-drop {
  width: 10px;
  height: 6px;
  margin-right: 5px;
}
.addr-refresh {
  width: 21px;
  height: 100%;
  display: flex;
  align-items: center;
  justify-content: center;
  border-left: 1px solid #d9d9d9;
}
.searchbox {
  width: 123px;
  height: 27px;
  margin-left: 12px;
  padding: 0 10px;
  display: flex;
  align-items: center;
  justify-content: space-between;
  border: 1px solid #d9d9d9;
  font-size: 13.5px;
  color: #6d6d6d;
}
.ex-body {
  flex: 1;
  min-height: 0;
  display: flex;
}
.sidebar {
  width: 198px;
  flex: none;
  padding-top: 26px;
  border-right: 1px solid #f0f0f0;
  font-size: 14.5px;
  color: #1c1c1c;
}
.side {
  height: 30px;
  width: 195px;
  display: flex;
  align-items: center;
  padding-left: 43px;
  white-space: nowrap;
}
.side-icon {
  width: 16px;
  height: 20px;
  flex: none;
  margin-right: 7px;
}
.side-drive {
  width: 20px;
  height: 16px;
  flex: none;
  margin: 0 5px 0 -2px;
}
.side-pin {
  width: 13px;
  height: 13px;
  margin-left: auto;
  margin-right: 4px;
}
.side-top {
  padding-left: 32px;
}
.side-top-icon {
  width: 18px;
  height: 18px;
  flex: none;
  margin-right: 5px;
}
.side-gap {
  margin-top: 10px;
}
.side-on {
  background: #d9d9d9;
}
.files {
  flex: 1;
  padding-top: 3px;
  font-size: 14.5px;
  color: #6d6d6d;
}
.file-head {
  height: 37px;
  margin-bottom: 7px;
  display: flex;
  align-items: center;
  color: #4c607a;
}
.file-head .col {
  height: 100%;
  display: flex;
  align-items: center;
  border-right: 1px solid #e5e5e5;
}
.file-row {
  height: 27px;
  display: flex;
  align-items: center;
  white-space: nowrap;
}
.col {
  flex: none;
  padding-left: 7px;
}
.col-name {
  width: 343px;
  position: relative;
  display: flex;
  align-items: center;
  padding-left: 24px;
  color: #1c1c1c;
}
.file-head .col-name {
  color: #4c607a;
}
.sort {
  position: absolute;
  left: 175px;
  top: 3px;
  width: 10px;
  height: 6px;
}
.file-icon {
  width: 20px;
  height: 20px;
  margin-right: 6px;
  flex: none;
}
.col-date {
  width: 150px;
}
.col-type {
  width: 483px;
}
.col-size {
  width: 100px;
  padding: 0 10px 0 7px;
}
.file-row .col-size {
  text-align: right;
}
.statusbar {
  height: 30px;
  flex: none;
  display: flex;
  align-items: center;
  padding-left: 17px;
  font-size: 14px;
  color: #444;
}
.status-count {
  padding-right: 14px;
  border-right: 1px solid #eee;
}
.viewbtns {
  margin-left: auto;
  display: flex;
  align-items: center;
  gap: 5px;
  padding-right: 10px;
  height: 100%;
}
.viewbtn-on {
  width: 28px;
  height: 29px;
  display: flex;
  align-items: center;
  justify-content: center;
  background: #cde8f7;
  border: 1px solid #26a0da;
}

/* right taskbar */
.taskbar-right {
  height: 50px;
  flex: none;
  display: flex;
  align-items: center;
  background: #201a1f;
  color: #fff;
}
.tr-start {
  width: 60px;
  height: 50px;
  display: flex;
  align-items: center;
  justify-content: center;
  background: #261a1c;
}
.tr-logo {
  width: 20px;
  height: 20px;
}
.tr-search {
  width: 430px;
  height: 50px;
  display: flex;
  align-items: center;
  padding: 0 18px 0 11px;
  background: #f1f1f1;
  border-top: 1px solid #bbb;
  font-size: 16px;
  color: #333;
}
.tr-ring {
  width: 28px;
  height: 28px;
  margin-right: 11px;
  border: 4px solid #111;
  border-radius: 50%;
}
.tr-mic {
  width: 14px;
  height: 20px;
  margin-left: auto;
}
.tr-view {
  width: 20px;
  height: 20px;
  margin-left: 20px;
}
.tr-word {
  width: 26px;
  height: 26px;
  margin-left: 40px;
}
.tr-tile {
  position: relative;
  height: 50px;
  display: flex;
  align-items: center;
  justify-content: center;
  border-bottom: 3px solid #63a8e0;
}
.tr-chrome {
  width: 61px;
  margin-left: 17px;
  background: #3c3a3f;
  border-right: 4px solid #4a494d;
}
.tr-chrome-icon {
  width: 28px;
  height: 28px;
  margin-left: -2px;
}
.tr-badge {
  position: absolute;
  left: 28px;
  top: 19px;
  width: 20px;
  height: 20px;
  border-radius: 50%;
  background: #2e6a1b;
  font-size: 11px;
  line-height: 20px;
  text-align: center;
  color: #ddd;
}
.tr-icon {
  width: 28px;
  height: 26px;
}
.tr-explorer {
  width: 51px;
  margin-left: 5px;
}
.tr-notepad {
  width: 51px;
  margin-left: 12px;
}
.tray {
  margin-left: auto;
  height: 50px;
  display: flex;
  align-items: center;
  padding-right: 6px;
  border-right: 1px solid #555;
}
.tray-people {
  width: 20px;
  height: 20px;
}
.tray-caret {
  width: 16px;
  height: 9px;
  margin-left: 28px;
}
.tray-batt {
  width: 20px;
  height: 12px;
  margin-left: 14px;
}
.tray-wifi {
  width: 16px;
  height: 14px;
  margin-left: 13px;
}
.tray-vol {
  width: 20px;
  height: 16px;
  margin-left: 12px;
}
.tray-clock {
  width: 80px;
  margin-left: 12px;
  display: flex;
  flex-direction: column;
  align-items: center;
  font-size: 13.5px;
  line-height: 22px;
  color: #eee;
}
.tray-note {
  position: relative;
  width: 40px;
  height: 50px;
  margin-left: 10px;
  padding: 15px 0 0 10px;
}
.tray-note svg {
  display: block;
}
.note-count {
  position: absolute;
  left: 19px;
  top: 23px;
  width: 20px;
  height: 20px;
  border-radius: 50%;
  background: #3a3a3a;
  border: 1px solid #888;
  font-size: 12px;
  line-height: 18px;
  text-align: center;
}
```
